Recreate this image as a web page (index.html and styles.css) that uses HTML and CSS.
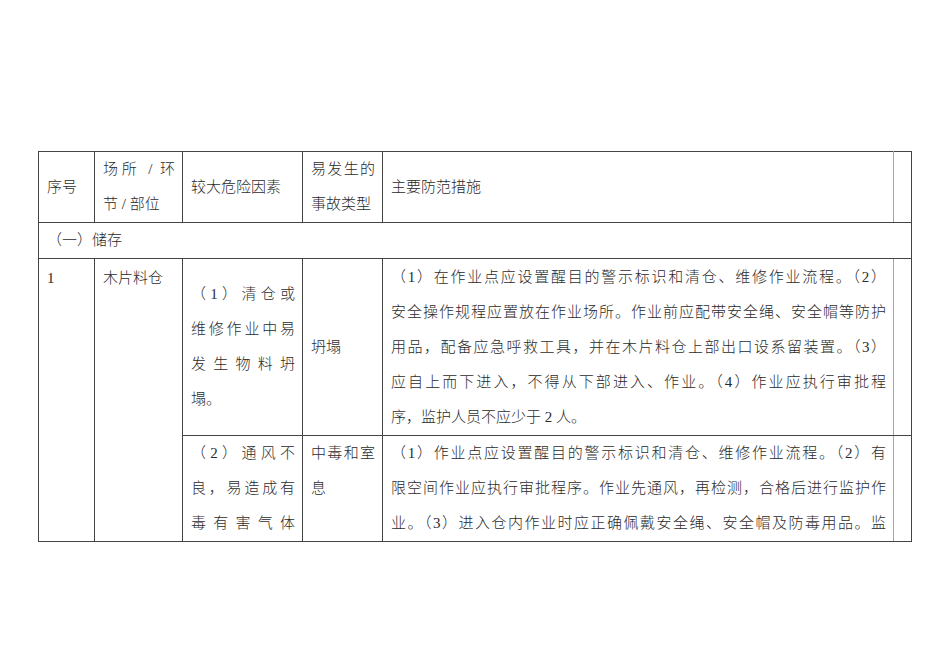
FILE: index.html
```html
<!DOCTYPE html>
<html lang="zh-CN">
<head>
<meta charset="utf-8">
<title>较大危险因素辨识</title>
<link rel="stylesheet" href="styles.css">
</head>
<body>
<div class="page">
  <table class="risk">
    <colgroup>
      <col class="c-no">
      <col class="c-place">
      <col class="c-factor">
      <col class="c-type">
      <col class="c-measure">
      <col class="c-edge">
    </colgroup>
    <tr class="head">
      <td>序号</td>
      <td><div class="j">场所 / 环</div><div>节 / 部位</div></td>
      <td>较大危险因素</td>
      <td><div class="j">易发生的</div><div>事故类型</div></td>
      <td class="m">主要防范措施</td>
      <td class="edge"></td>
    </tr>
    <tr class="sec">
      <td colspan="6">（一）储存</td>
    </tr>
    <tr class="r1">
      <td rowspan="2" class="top first">1</td>
      <td rowspan="2" class="top first">木片料仓</td>
      <td>
        <div class="j">（1）清仓或</div>
        <div class="j">维修作业中易</div>
        <div class="j">发生物料坍</div>
        <div>塌。</div>
      </td>
      <td>坍塌</td>
      <td class="m">
        <div class="j">（1）在作业点应设置醒目的警示标识和清仓、维修作业流程。（2）</div>
        <div class="j">安全操作规程应置放在作业场所。作业前应配带安全绳、安全帽等防护</div>
        <div class="j">用品，配备应急呼救工具，并在木片料仓上部出口设系留装置。（3）</div>
        <div class="j">应自上而下进入，不得从下部进入、作业。（4）作业应执行审批程</div>
        <div>序，监护人员不应少于 2 人。</div>
      </td>
      <td class="edge"></td>
    </tr>
    <tr class="r2">
      <td class="top">
        <div class="j">（2）通风不</div>
        <div class="j">良，易造成有</div>
        <div class="j">毒有害气体</div>
      </td>
      <td class="top">
        <div class="j">中毒和室</div>
        <div>息</div>
      </td>
      <td class="m top">
        <div class="j">（1）作业点应设置醒目的警示标识和清仓、维修作业流程。（2）有</div>
        <div class="j">限空间作业应执行审批程序。作业先通风，再检测，合格后进行监护作</div>
        <div class="j">业。（3）进入仓内作业时应正确佩戴安全绳、安全帽及防毒用品。监</div>
      </td>
      <td class="edge"></td>
    </tr>
  </table>
</div>
</body>
</html>
```

FILE: styles.css
```css
html, body {
  margin: 0;
  padding: 0;
  background: #ffffff;
}

.page {
  padding: 151px 0 0 38px;
}

.risk {
  border-collapse: collapse;
  table-layout: fixed;
  width: 873px;
  font-family: "Liberation Serif", "Noto Sans CJK SC", serif;
  font-size: 15px;
  font-weight: 300;
  line-height: 35px;
  color: #2b2b2b;
}

.c-no { width: 56px; }
.c-place { width: 88px; }
.c-factor { width: 120px; }
.c-type { width: 80px; }
.c-measure { width: 511px; }
.c-edge { width: 18px; }

.risk td {
  border: 1px solid #444444;
  padding: 0 7px 0 8px;
  vertical-align: middle;
  text-align: left;
}

.risk td.top {
  vertical-align: top;
}

.risk td.first {
  padding-top: 2px;
}

.risk td.m {
  border-right-color: #a6a6a6;
}

.risk td.edge {
  border-left-color: #a6a6a6;
  padding: 0;
}

.head {
  height: 71px;
}

.sec {
  height: 36px;
}

.r1 {
  height: 177px;
}

.r2 {
  height: 105px;
}

.j {
  text-align: justify;
  text-align-last: justify;
}
```
